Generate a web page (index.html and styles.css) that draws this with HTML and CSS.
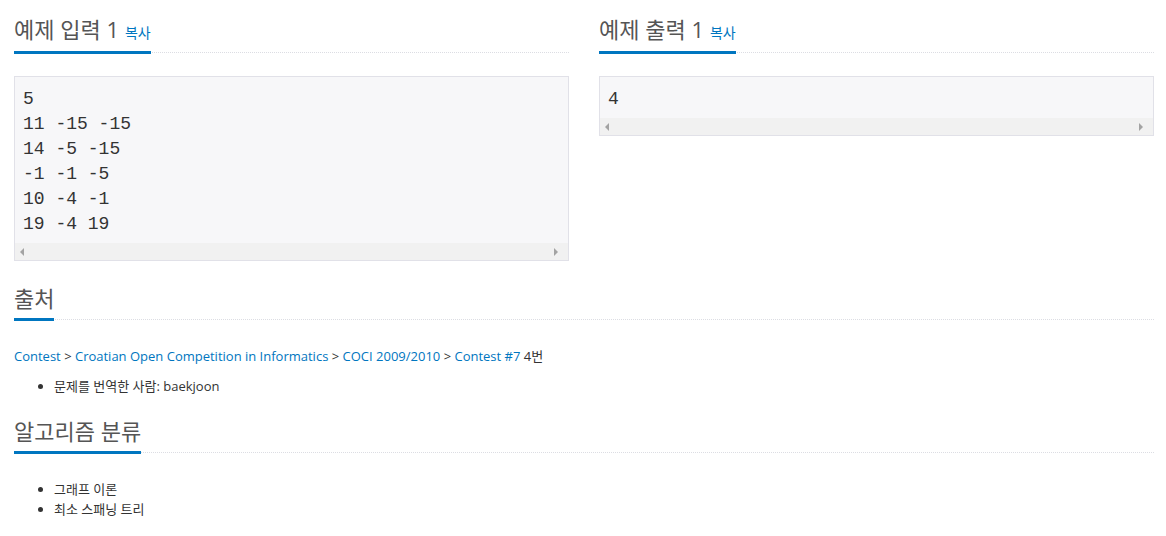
FILE: index.html
```html
<!DOCTYPE html>
<html lang="ko">
<head>
<meta charset="utf-8">
<title>문제</title>
<link rel="stylesheet" href="styles.css">
</head>
<body>
<div class="container">
  <div class="row">
    <section class="col">
      <div class="headline">
        <h2>예제 입력 1 <button class="copy">복사</button></h2>
      </div>
      <div class="sample">
        <pre>5
11 -15 -15
14 -5 -15
-1 -1 -5
10 -4 -1
19 -4 19</pre>
        <div class="hscroll"><span class="arr left"></span><span class="arr right"></span></div>
      </div>
    </section>
    <section class="col">
      <div class="headline">
        <h2>예제 출력 1 <button class="copy">복사</button></h2>
      </div>
      <div class="sample">
        <pre>4</pre>
        <div class="hscroll"><span class="arr left"></span><span class="arr right"></span></div>
      </div>
    </section>
  </div>

  <section class="block source">
    <div class="headline">
      <h2>출처</h2>
    </div>
    <p class="crumbs"><a href="#">Contest</a> &gt; <a href="#">Croatian Open Competition in Informatics</a> &gt; <a href="#">COCI 2009/2010</a> &gt; <a href="#">Contest #7</a> 4번</p>
    <ul class="list">
      <li>문제를 번역한 사람: baekjoon</li>
    </ul>
  </section>

  <section class="block tags">
    <div class="headline">
      <h2>알고리즘 분류</h2>
    </div>
    <ul class="list taglist">
      <li>그래프 이론</li>
      <li>최소 스패닝 트리</li>
    </ul>
  </section>
</div>
</body>
</html>
```

FILE: styles.css
```css
html, body {
  margin: 0;
  padding: 0;
  background: #fff;
}
body {
  font-family: "Open Sans", "Noto Sans CJK KR", sans-serif;
  font-size: 13px;
  line-height: 20px;
  color: #333;
}
.container {
  width: 1140px;
  padding: 18px 12px 0 14px;
}
.row {
  display: grid;
  grid-template-columns: 555px 555px;
  column-gap: 30px;
}
.headline {
  border-bottom: 1px dotted #dcdde3;
  display: flex;
}
.headline h2 {
  margin: 0 0 -2px 0;
  font-family: "Open Sans", "Noto Sans CJK KR", sans-serif;
  font-weight: 400;
  font-size: 22px;
  line-height: 22px;
  color: #555;
  padding-bottom: 9px;
  border-bottom: 3px solid #0076c0;
  display: flex;
  align-items: baseline;
}
.copy {
  border: 0;
  background: none;
  padding: 0;
  margin-left: 6px;
  font-family: "Open Sans", "Noto Sans CJK KR", sans-serif;
  font-size: 14px;
  color: #0076c0;
  cursor: pointer;
}
.sample {
  margin-top: 23px;
  border: 1px solid #e1e1e8;
  background: #f7f7f9;
}
.sample pre {
  margin: 0;
  padding: 10px 9px 6px 8px;
  font-family: "Liberation Mono", monospace;
  font-size: 18px;
  line-height: 25px;
  color: #333;
}
.hscroll {
  height: 17px;
  background: #f1f1f1;
  display: flex;
  justify-content: space-between;
  align-items: center;
  padding: 0 10px 0 5px;
}
.arr {
  width: 0;
  height: 0;
  border-top: 4px solid transparent;
  border-bottom: 4px solid transparent;
}
.arr.left { border-right: 4px solid #a3a3a3; }
.arr.right { border-left: 4px solid #a3a3a3; }

.block { margin-top: 26px; }
.block.tags { margin-top: 24px; }
.crumbs {
  margin: 26px 0 10px 0;
}
a {
  color: #0076c0;
  text-decoration: none;
}
.list {
  margin: 0;
  padding-left: 40px;
}
.taglist { margin-top: 26px; }
```
